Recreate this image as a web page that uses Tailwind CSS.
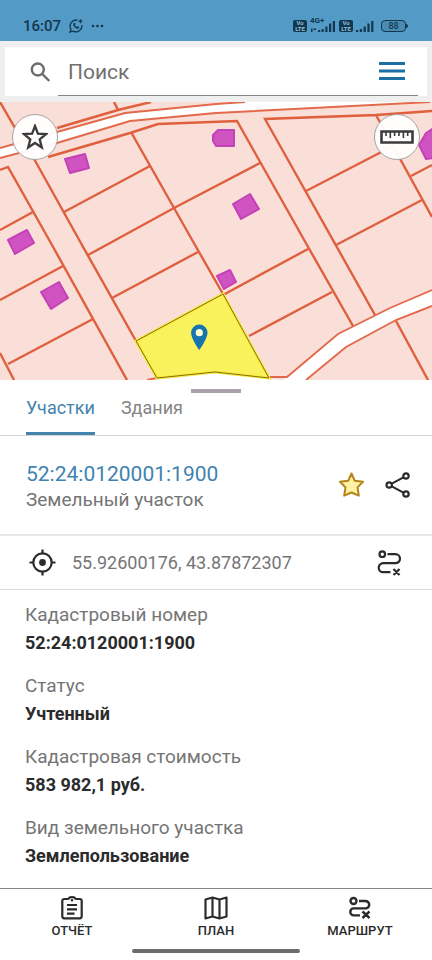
<!DOCTYPE html>
<html lang="ru">
<head>
    <meta charset="UTF-8">
    <meta name="viewport" content="width=device-width, initial-scale=1.0">
    <title>Участки</title>
    <script src="https://cdn.jsdelivr.net/npm/@tailwindcss/browser@4"></script>
</head>
<body class="bg-white font-['Roboto',sans-serif] text-[#2b2b2b]">
    <div class="flex flex-col min-h-screen">

        <!-- Status bar -->
        <div class="flex items-center justify-between h-[41px] pt-2.5 pl-[23px] pr-6 bg-[#549ac6] text-[#12384f]">
            <div class="flex items-center gap-2">
                <span class="text-[15px] leading-5 font-medium">16:07</span>
                <svg class="w-3.5 h-3.5" viewBox="0 0 14 14" fill="none" stroke="currentColor" stroke-width="1.3">
                    <path d="M8.4 1.2A6 6 0 0 0 2 10.2L1 13l3-.9A6 6 0 0 0 12.9 6"/>
                    <path d="M4.6 4.2c-.9 2.8 2.2 5.9 5 5.2l.4-1.3-1.5-.8-.8.8c-1-.4-1.7-1.2-2-2l.7-.8-.6-1.4z" fill="currentColor" stroke-width=".3"/>
                    <path d="M11.5.2v4M9.5 2.2h4"/>
                </svg>
                <svg class="w-3.5 h-1" viewBox="0 0 14 4" fill="currentColor">
                    <circle cx="2" cy="2" r="1.3"/><circle cx="6.5" cy="2" r="1.3"/><circle cx="11" cy="2" r="1.3"/>
                </svg>
            </div>
            <div class="flex items-center gap-[3px]">
                <div class="w-3.5 h-3 rounded-xs bg-[#12384f] text-[#8fbdda] text-[6px] leading-[6px] font-bold text-center">Vo<br>LTE</div>
                <div class="relative">
                    <svg class="w-[26px] h-3" viewBox="0 0 26 12" fill="currentColor">
                        <path d="M1 8.5h1.5V12H1zM3.500 8.500H6V10H3.500zM8 10h2.200v2H8zM11.500 9h2.200v3h-2.200zM15.300 6.500h2.200V12h-2.200zM19 3.500h2.200V12H19zM22.800 1H25v11h-2.200z"/>
                    </svg>
                    <span class="absolute left-0 -top-1 text-[8px] leading-[10px] font-bold">4G+</span>
                </div>
                <div class="w-3.5 h-3 rounded-xs bg-[#12384f] text-[#8fbdda] text-[6px] leading-[6px] font-bold text-center">Vo<br>LTE</div>
                <svg class="w-[18px] h-3" viewBox="0 0 18 12" fill="currentColor">
                    <path d="M0 10h2.200v2H0zM3.800 9H6v3H3.800zM7.600 6.500h2.200V12H7.600zM11.400 3.500h2.200V12h-2.200zM15.200 1h2.200v11h-2.200z"/>
                </svg>
                <div class="flex items-center pl-1">
                    <div class="flex items-center justify-center w-[25px] h-3 border border-current rounded bg-[#4a8bb3] text-[9px] leading-[10px] font-medium">88</div>
                    <div class="w-0.5 h-1 bg-current rounded-r"></div>
                </div>
            </div>
        </div>

        <!-- Search -->
        <div class="h-[61px] pt-1.5 px-[5px] bg-[#efefef]">
            <div class="flex items-center h-[49px] pl-[25px] pr-[9px] bg-white">
                <label for="search" class="shrink-0">
                    <svg class="w-5 h-5" viewBox="0 0 20 20" fill="none" stroke="#6b6b6b" stroke-width="2.4" role="img" aria-label="Поиск">
                        <circle cx="7.8" cy="7.5" r="6"/>
                        <path d="M12.3 12l7 7"/>
                    </svg>
                </label>
                <div class="flex items-center flex-1 h-full ml-2 pt-0.5 pl-2.5 pr-[13px] border-b border-[#858585]">
                    <input id="search" type="text" placeholder="Поиск" class="flex-1 min-w-0 text-[21px] leading-7 outline-none placeholder:text-[#707070]">
                    <button type="button" aria-label="Меню">
                        <svg class="w-[26px] h-5" viewBox="0 0 26 20" fill="#1c6ea4">
                            <path d="M0 0h26v3H0zM0 7.500h26v3H0zM0 15h26v3H0z"/>
                        </svg>
                    </button>
                </div>
            </div>
        </div>

        <!-- Map -->
        <div class="relative">
            <svg class="block w-full h-auto" viewBox="0 102 432 278" fill="none">
                <path d="M0 102h432v278H0z" fill="#fadfd8"/>
                <!-- roads -->
                <path d="M0 148L57 132L125 113L216 104L245 102H430L216 113L130 121L57 143L0 158z" fill="#fff"/>
                <path d="M287 377L338 334L390 308L432 290V306L396 320L346 347L306 380H283z" fill="#fff"/>
                <path d="M157 380L215 373L269 379L283 380z" fill="#fff"/>
                <g stroke="#e2694b" stroke-width="1.9">
                    <path d="M0 148L57 132L125 113L216 104L245 102M0 158L57 143L130 121L216 113L430 102"/>
                    <path d="M268 377H287L338 334L390 308L432 290M306 380L346 347L396 320L432 306M147 380L157 378"/>
                </g>
                <!-- plot borders -->
                <g stroke="#e05f3e" stroke-width="2.4">
                    <path d="M0 102L15 128M114 102L118 110M57 128L118 110L151 102"/>
                    <path d="M0 170L8 167L52 245L127 380M48 157L130 133L158 124L237 121L307 245L353 326"/>
                    <path d="M33 157L82 245L136 341M131 132L174 208L195 245L223 294"/>
                    <path d="M64 212L150 166M88 255L174 208L260 163M112 298L198 252M223 295L308 249M249 336L332 292"/>
                    <path d="M0 230L33 212M0 300L63 266M8 364L93 319M0 353L14 380"/>
                    <path d="M375 315L265 119L376 115L432 111M376 115L432 217"/>
                    <path d="M306 191L393 146M336 245L422 200M411 176L432 165M396 321L428 380"/>
                </g>
                <!-- buildings -->
                <g fill="#d053c2" stroke="#c441b8" stroke-width="2" stroke-linejoin="round">
                    <path d="M65 159L85 154L89 168L70 173zM213 135L217 131L218 130H234V146L216 146L213 141zM233 204L250 194L259 209L241 219z"/>
                    <path d="M8 240L27 230L34 243L15 254zM41 292L59 282L68 298L51 309zM217 276L230 270L236 282L224 289zM419 145L426 133L434 128V158L426 159z"/>
                </g>
                <path d="M136 341L223 294L269 378L215 372L157 378z" fill="#faf25c" stroke="#fbea3c" stroke-width="3"/>
                <path d="M136 341L223 294L269 378L215 372L157 378z" stroke="#80700c" stroke-width="1"/>
                <circle cx="199.300" cy="333" r="5" fill="#fdfbd0"/>
                <path fill-rule="evenodd" d="M199.300 324.500a8.200 8.200 0 0 0-8.200 8.200c0 6 8.200 17.300 8.200 17.300s8.200-11.300 8.200-17.300a8.200 8.200 0 0 0-8.200-8.200zm0 4.600a3.600 3.600 0 1 1 0 7.200 3.600 3.600 0 0 1 0-7.200z" fill="#1675ae"/>
            </svg>
            <button type="button" aria-label="В избранное" class="absolute top-3 left-3 flex items-center justify-center size-[46px] rounded-full border border-[#a3a3a3] bg-white/95">
                <svg class="size-[26px]" viewBox="0 0 26 26" fill="none" stroke="#3b3b3b" stroke-width="2.3">
                    <path d="M13 2L15.900 9.700L24 10.100L17.700 15.300L19.800 23.500L13 19L6.200 23.500L8.300 15.300L2 10.100L10.100 9.700z"/>
                </svg>
            </button>
            <button type="button" aria-label="Линейка" class="absolute top-3 right-3 flex items-center justify-center size-[46px] rounded-full border border-[#a3a3a3] bg-white/95">
                <svg class="w-[34px] h-[14px] shrink-0" viewBox="0 0 34 14" fill="none" stroke="#3b3b3b">
                    <path d="M1.500 1.500h31v11h-31z" stroke-width="2.6"/>
                    <path d="M6 2v4M10.300 2v6M14.600 2v4M19 2v4M23.400 2v6M27.700 2v4" stroke-width="1.6"/>
                </svg>
            </button>
        </div>

        <!-- Tabs -->
        <div class="relative border-b border-[#d4d4d4]">
            <div class="absolute top-[9px] left-1/2 -translate-x-1/2 w-[50px] h-1 bg-[#aaa3ab]"></div>
            <nav class="flex h-[55px] gap-[26px] pl-[26px] text-[18px] leading-6">
                <a href="#plots" class="pt-4 border-b-3 border-[#4384ad] text-[#4384ad]">Участки</a>
                <a href="#buildings" class="pt-4 text-[#858585]">Здания</a>
            </nav>
        </div>

        <!-- Selected plot -->
        <div class="flex items-center h-[100px] pl-[26px] pr-[21px] border-b-2 border-[#e8e6e7]">
            <div class="flex-1 pt-0.5">
                <h1 class="text-[21px] leading-7 text-[#3f83b0]">52:24:0120001:1900</h1>
                <p class="text-[19px] leading-6 text-[#757575]">Земельный участок</p>
            </div>
            <div class="flex items-center gap-5">
                <button type="button" aria-label="Избранное">
                    <svg class="size-[26px]" viewBox="0 0 26 26" fill="#fff3a3" stroke="#b5851b" stroke-width="2" stroke-linejoin="round">
                        <path d="M12.500 1.500L15.800 8.800L24 9.800L18.500 15.400L19.800 23.700L12.500 20.500L5.200 23.700L6.500 15.400L1 9.800L9.200 8.800z"/>
                    </svg>
                </button>
                <button type="button" aria-label="Поделиться">
                    <svg class="size-[26px]" viewBox="0 0 26 26" fill="none" stroke="#2b2b2b" stroke-width="2.2">
                        <circle cx="4.2" cy="13" r="2.700"/><circle cx="21" cy="4" r="2.700"/><circle cx="21" cy="22" r="2.700"/>
                        <path d="M6.800 11.600L18.400 5.400M6.800 14.400L18.400 20.600"/>
                    </svg>
                </button>
            </div>
        </div>

        <!-- Coordinates -->
        <div class="flex items-center h-[54px] pl-[29px] pr-[29px] border-b border-[#d9d9d9]">
            <svg class="size-[27px]" viewBox="0 0 27 27" fill="none" stroke="#2b2b2b" stroke-width="2.2">
                <circle cx="13.500" cy="13.500" r="9.200"/>
                <circle cx="13.500" cy="13.500" r="3.400" fill="#2b2b2b" stroke="none"/>
                <path d="M13.500 .5v4.500M13.500 22v4.500M.5 13.500H5M22 13.500h4.500"/>
            </svg>
            <span class="flex-1 pl-4 text-[18px] leading-6 text-[#757575]">55.92600176, 43.87872307</span>
            <button type="button" aria-label="Построить маршрут">
                <svg class="size-[26px]" viewBox="0 0 26 26" fill="none" stroke="#2b2b2b" stroke-width="2.2">
                    <circle cx="5.300" cy="4.200" r="2.800"/>
                    <path d="M10.500 4.200h8a4.500 4.500 0 0 1 0 9H6.200a4.500 4.500 0 0 0 0 9H13.500M16.500 19l6 6M22.500 19l-6 6"/>
                </svg>
            </button>
        </div>

        <!-- Details -->
        <dl class="flex-1 flex flex-col gap-[15px] pt-[11px] pl-[25px] text-[18px] leading-7">
            <div>
                <dt class="text-[19px] text-[#757575]">Кадастровый номер</dt>
                <dd class="font-bold">52:24:0120001:1900</dd>
            </div>
            <div>
                <dt class="text-[19px] text-[#757575]">Статус</dt>
                <dd class="font-bold">Учтенный</dd>
            </div>
            <div>
                <dt class="text-[19px] text-[#757575]">Кадастровая стоимость</dt>
                <dd class="font-bold">583 982,1 руб.</dd>
            </div>
            <div>
                <dt class="text-[19px] text-[#757575]">Вид земельного участка</dt>
                <dd class="font-bold">Землепользование</dd>
            </div>
        </dl>

        <!-- Bottom navigation -->
        <div class="flex flex-col items-center h-[72px] border-t border-[#858585]">
            <nav class="grid grid-cols-3 w-full pt-1.5 text-[13px] leading-5 font-medium">
                <a href="#report" class="flex flex-col items-center">
                    <svg class="size-[26px]" viewBox="0 0 26 26" fill="none" stroke="#2b2b2b" stroke-width="2.200">
                        <path d="M9.500 4H5.300a2 2 0 0 0-2 2v15.300a2 2 0 0 0 2 2h15.400a2 2 0 0 0 2-2V6a2 2 0 0 0-2-2h-4.200M9.500 4.500c.3-3.300 6.700-3.300 7 0M8 10h10M8 14.300h10M8 18.600h7.500"/>
                        <circle cx="13" cy="5.300" r="1.200" fill="#2b2b2b" stroke="none"/>
                    </svg>
                    <span>ОТЧЁТ</span>
                </a>
                <a href="#plan" class="flex flex-col items-center">
                    <svg class="size-[26px]" viewBox="0 0 26 26" fill="none" stroke="#2b2b2b" stroke-width="2.200" stroke-linejoin="round">
                        <path d="M2.500 4.500L9.500 2.500L16.500 4.500L23.500 2.500V21.500L16.500 23.500L9.500 21.500L2.500 23.500zM9.500 2.500v19M16.500 4.500v19"/>
                    </svg>
                    <span>ПЛАН</span>
                </a>
                <a href="#route" class="flex flex-col items-center">
                    <svg class="size-[26px]" viewBox="0 0 26 26" fill="none" stroke="#2b2b2b" stroke-width="2.400">
                        <circle cx="6.500" cy="6" r="3"/>
                        <path d="M12 6h6.500a3.700 3.700 0 0 1 0 7.400H6.800a3.500 3.500 0 0 0 0 7H13M15.500 16.500l7 6.500M22.500 16.500L15.500 23"/>
                    </svg>
                    <span>МАРШРУТ</span>
                </a>
            </nav>
            <div class="w-[168px] h-1 mt-2 rounded-full bg-[#6b6b6b]"></div>
        </div>
    </div>
</body>
</html>
